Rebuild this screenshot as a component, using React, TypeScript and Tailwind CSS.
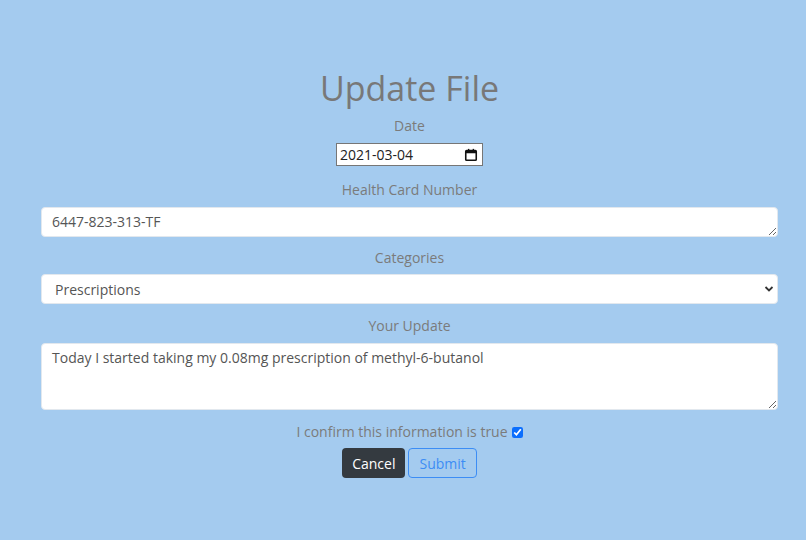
import React from "react";

export default function App() {
  const font = { fontFamily: '"Open Sans", "Noto Sans", sans-serif' };
  return (
    <div className="min-h-[540px] w-full bg-[#a4cbef] text-[#7b7b7b]" style={font}>
      <form className="flex flex-col items-center pt-[66px] pl-[41px] pr-[28px]">
        <h1 className="h-[44px] text-[34px] leading-[44px] text-[#787878]">Update File</h1>

        <label className="mt-[6px] h-[20px] text-[14px] leading-[20px]">Date</label>
        <div className="mt-[7px] flex h-[23px] w-[147px] items-center justify-between border border-[#767676] bg-white pl-[3px] pr-[4px] text-[14px] text-[#222]">
          <span>2021-03-04</span>
          <svg width="14" height="14" viewBox="0 0 16 16" fill="none">
            <rect x="2" y="3" width="12" height="11" rx="1" stroke="#111" strokeWidth="1.8" />
            <rect x="2" y="3" width="12" height="3" fill="#111" />
            <rect x="4.5" y="1" width="1.6" height="3" fill="#111" />
            <rect x="9.9" y="1" width="1.6" height="3" fill="#111" />
          </svg>
        </div>

        <label className="mt-[14px] h-[20px] text-[14px] leading-[20px]">Health Card Number</label>
        <textarea
          className="mt-[7px] block h-[30px] w-full resize-y rounded-[4px] border border-[#e2e8ee] bg-white px-[10px] py-[4px] text-[14px] leading-[20px] text-[#555] outline-none"
          defaultValue="6447-823-313-TF"
        />

        <label className="mt-[11px] h-[20px] text-[14px] leading-[20px]">Categories</label>
        <div className="relative mt-[6px] h-[30px] w-full">
          <select
            className="h-full w-full appearance-none rounded-[4px] border border-[#e2e8ee] bg-white pl-[13px] text-[14px] text-[#555] outline-none"
            defaultValue="Prescriptions"
          >
            <option>Prescriptions</option>
            <option>Appointments</option>
            <option>Symptoms</option>
          </select>
          <svg
            className="pointer-events-none absolute right-[4px] top-[11px]"
            width="10"
            height="8"
            viewBox="0 0 10 8"
            fill="none"
          >
            <path d="M1.5 2l3.5 3.5L8.5 2" stroke="#333" strokeWidth="1.8" />
          </svg>
        </div>

        <label className="mt-[12px] h-[20px] text-[14px] leading-[20px]">Your Update</label>
        <textarea
          className="mt-[7px] block h-[67px] w-full resize-y rounded-[4px] border border-[#e2e8ee] bg-white px-[10px] py-[4px] text-[14px] leading-[20px] text-[#555] outline-none"
          defaultValue="Today I started taking my 0.08mg prescription of methyl-6-butanol"
        />

        <div className="mt-[12px] flex h-[20px] items-center gap-[4px] text-[14px] leading-[20px]">
          <span>I confirm this information is true</span>
          <input type="checkbox" defaultChecked className="h-[11px] w-[11px] accent-[#0b6efd]" />
        </div>

        <div className="mt-[6px] flex gap-[3px]">
          <button
            type="button"
            className="h-[30px] rounded-[4px] bg-[#343a40] px-[10px] text-[14px] text-white"
          >
            Cancel
          </button>
          <button
            type="button"
            className="h-[30px] rounded-[4px] border border-[#3c8df5] px-[10px] text-[14px] text-[#3c8df5]"
          >
            Submit
          </button>
        </div>
      </form>
    </div>
  );
}
